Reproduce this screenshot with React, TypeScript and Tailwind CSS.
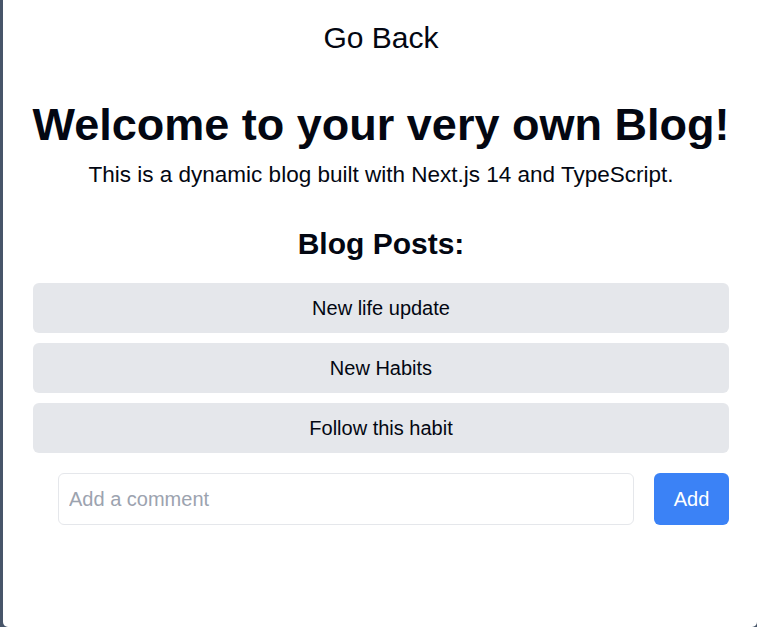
import React, { useState } from "react";

const posts = ["New life update", "New Habits", "Follow this habit"];

export default function App() {
  const [comment, setComment] = useState("");

  return (
    <div
      className="h-screen bg-[#475569] pl-[3px] overflow-hidden"
      style={{ fontFamily: '"Liberation Sans", Arial, sans-serif' }}
    >
      <div className="h-[627px] bg-white rounded-b-[5px] text-[#030712]">
        <div className="w-[696px] ml-[30px] flex flex-col items-center">
          <button className="mt-[20px] text-[30px] leading-[36px]">Go Back</button>

          <h1 className="mt-[44px] text-[45px] leading-[50px] font-bold whitespace-nowrap">
            Welcome to your very own Blog!
          </h1>
          <p className="mt-[9px] text-[22.5px] leading-[32px] whitespace-nowrap">
            This is a dynamic blog built with Next.js 14 and TypeScript.
          </p>

          <h2 className="mt-[35px] text-[30px] leading-[36px] font-bold">Blog Posts:</h2>

          <ul className="mt-[21px] w-full flex flex-col gap-[10px]">
            {posts.map((p) => (
              <li
                key={p}
                className="h-[50px] flex items-center justify-center bg-[#e5e7eb] rounded-md text-[20px]"
              >
                {p}
              </li>
            ))}
          </ul>

          <div className="mt-[20px] w-full flex pl-[25px] gap-[20px]">
            <input
              value={comment}
              onChange={(e) => setComment(e.target.value)}
              placeholder="Add a comment"
              className="flex-1 h-[52px] border border-[#e5e7eb] rounded-md px-[10px] text-[20px] placeholder:text-[#9ca3af] outline-none"
            />
            <button className="w-[75px] h-[52px] bg-[#3b82f6] text-white rounded-md text-[20px]">
              Add
            </button>
          </div>
        </div>
      </div>
    </div>
  );
}
